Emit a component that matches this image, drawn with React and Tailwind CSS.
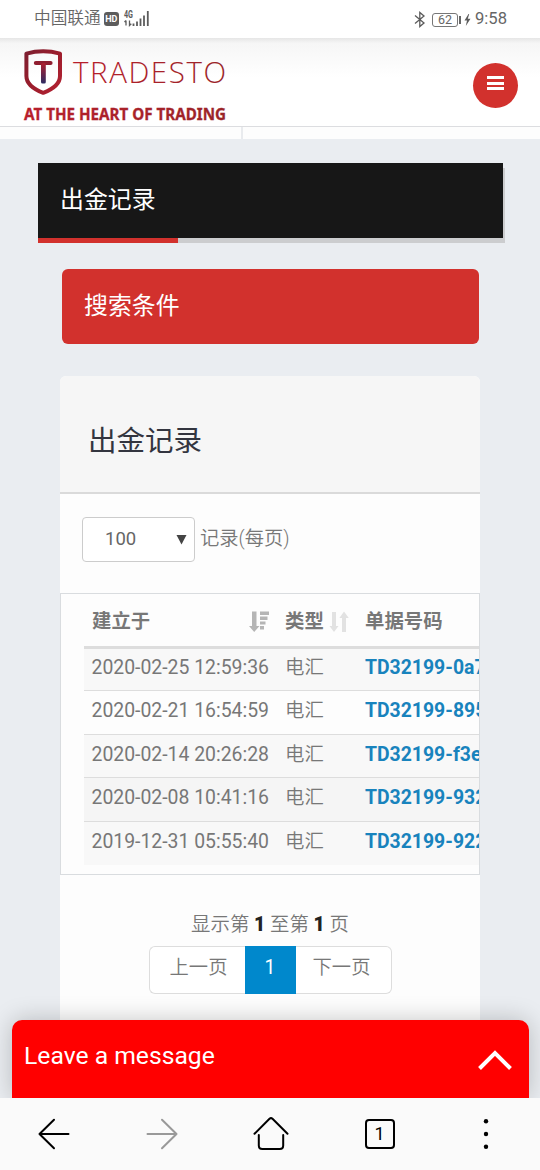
const records = [
  { date: "2020-02-25 12:59:36", type: "电汇", doc: "TD32199-0a7" },
  { date: "2020-02-21 16:54:59", type: "电汇", doc: "TD32199-895" },
  { date: "2020-02-14 20:26:28", type: "电汇", doc: "TD32199-f3e" },
  { date: "2020-02-08 10:41:16", type: "电汇", doc: "TD32199-932" },
  { date: "2019-12-31 05:55:40", type: "电汇", doc: "TD32199-922" },
];

function StatusBar() {
  return (
    <div className="h-[38px] bg-white flex items-center justify-between pt-px pl-[34px] pr-[33px] text-[#666]">
      <div className="flex items-center">
        <span className="text-[16.7px] leading-none font-[350]">中国联通</span>
        <span className="ml-[3px] w-[15px] h-[14px] rounded-[3px] bg-[#5c5c5c] text-white text-[9px] leading-[14px] font-bold text-center">
          HD
        </span>
        <svg className="ml-[5px] -mt-px overflow-visible" width="26" height="17" viewBox="0 0 26 17">
          <text x="0" y="8" fontSize="10" fontWeight="700" fill="#5c5c5c" textLength="9" lengthAdjust="spacingAndGlyphs">4G</text>
          <path d="M2 10.5V15.5M0.5 12L2 10.5M5.5 10.5V15.5L7.3 13.7" fill="none" stroke="#5c5c5c" strokeWidth="1.3" />
          <path d="M9.5 13.5V16M13 11.5V16M16.5 8.5V16M20 5.5V16M23.8 1V16" stroke="#5c5c5c" strokeWidth="1.8" />
        </svg>
      </div>
      <div className="flex items-center">
        <svg width="12" height="17" viewBox="0 0 12 17" fill="none" stroke="#5c5c5c" strokeWidth="1.3">
          <path d="M1 4.5L10 12L5.8 15.5V1.5L10 5L1 12.5" />
        </svg>
        <span className="ml-[6px] w-[26px] h-[14px] rounded-[3px] border border-[#777] text-[12.5px] leading-[12px] text-center">62</span>
        <span className="w-[2px] h-[8px] bg-[#666] ml-px" />
        <svg className="ml-[3px]" width="7" height="12" viewBox="0 0 7 12">
          <path d="M4.5 0L0.5 6.5H3L1.8 12L6.5 4.8H3.8L5.2 0Z" fill="#5c5c5c" />
        </svg>
        <span className="ml-[4px] text-[16.6px] leading-none">9:58</span>
      </div>
    </div>
  );
}

function Logo() {
  return (
    <svg width="210" height="78" viewBox="0 0 210 78" className="block overflow-visible">
      <defs>
        <linearGradient id="shield" x1="0" y1="0" x2="1" y2="1">
          <stop offset="0" stopColor="#7d1f30" />
          <stop offset="0.5" stopColor="#9c1d2c" />
          <stop offset="1" stopColor="#b32232" />
        </linearGradient>
        <linearGradient id="stem" x1="0" y1="0" x2="0" y2="1">
          <stop offset="0" stopColor="#b01f2e" />
          <stop offset="1" stopColor="#2d2b62" />
        </linearGradient>
        <linearGradient id="word" x1="0" y1="0" x2="1" y2="0">
          <stop offset="0" stopColor="#b81f2b" />
          <stop offset="1" stopColor="#9a2428" />
        </linearGradient>
      </defs>
      <path
        d="M2.4 5.6Q19.2 0.8 36 5.6V28C36 36 28 41.5 19.2 44.8C10.4 41.5 2.4 36 2.4 28Z"
        fill="none"
        stroke="url(#shield)"
        strokeWidth="4"
        strokeLinejoin="round"
      />
      <path d="M11.8 15H26.6" stroke="#8f1d2f" strokeWidth="4" strokeLinecap="round" />
      <rect x="17" y="15" width="4.8" height="20.5" rx="1.5" fill="url(#stem)" />
      <text x="49" y="35" fontFamily="Open Sans" fontWeight="300" fontSize="29.5" fill="url(#word)" textLength="153" lengthAdjust="spacing">
        TRADESTO
      </text>
      <text x="0" y="71.5" fontFamily="Noto Sans" fontWeight="700" fontSize="16.6" fill="url(#word)" stroke="url(#word)" strokeWidth="0.3" textLength="202" lengthAdjust="spacingAndGlyphs">
        AT THE HEART OF TRADING
      </text>
    </svg>
  );
}

function Header() {
  return (
    <header>
      <div className="h-[89px] flex justify-between items-start pl-6 pr-[22px] border-b border-[#dcdde0] bg-linear-to-b from-[#e6e6e6] from-0% via-[#f6f6f6] via-6% to-white to-45%">
        <div className="pt-[10px]">
          <Logo />
        </div>
        <button className="mt-[25px] w-[45px] h-[45px] rounded-full bg-[#d2312d] flex flex-col items-center pt-[13px] gap-[2.7px]">
          <span className="w-[17px] h-[3px] bg-white" />
          <span className="w-[17px] h-[3px] bg-white" />
          <span className="w-[17px] h-[3px] bg-white" />
        </button>
      </div>
      <div className="h-[12px] flex bg-[#fdfdfd]">
        <div className="w-[243px] border-r-2 border-[#e9ebee]" />
      </div>
    </header>
  );
}

function SortDesc() {
  return (
    <svg width="21" height="22" viewBox="0 0 21 22" fill="#b5b5b5">
      <path d="M3 0.5H7.5V15H10.5L5.2 21L0 15H3Z" />
      <path d="M11 0.5H20V4H11ZM11 5.5H18.5V9H11ZM11 10.5H16.5V13.5H11ZM11 15H15V18.5H11Z" />
    </svg>
  );
}

function SortBoth() {
  return (
    <svg width="20" height="22" viewBox="0 0 20 22" fill="#e2e2e2">
      <path d="M3 1H7V15H9.5L5 21L0.5 15H3Z" />
      <path d="M13 21H17V7H19.8L15 0.5L10.4 7H13Z" />
    </svg>
  );
}

function RecordsTable() {
  return (
    <div className="h-[282px] border border-[#d9dcdf] bg-[#fdfdfd] pl-[23px] overflow-hidden">
      <table className="w-[440px] table-fixed border-collapse text-left text-[19.4px] leading-[22px] text-[#777] whitespace-nowrap">
        <thead>
          <tr className="h-[53px] border-b-3 border-[#dddddd]">
            <th className="w-[193px] pl-2 font-bold">
              <div className="flex justify-between items-end pr-[7px] pt-[5px]">
                建立于 <SortDesc />
              </div>
            </th>
            <th className="w-[80px] pl-2 font-bold">
              <div className="flex gap-[5px] pt-[5px]">
                类型 <SortBoth />
              </div>
            </th>
            <th className="pl-2 pt-[5px] font-bold">单据号码</th>
          </tr>
        </thead>
        <tbody>
          {records.map((r) => (
            <tr key={r.date} className="h-[43.5px] border-b border-[#dddddd] odd:bg-[#f8f8f8] nth-[4]:bg-[#f5f5f5] last:border-b-0">
              <td className="pl-[7.5px] pb-[2px]">{r.date}</td>
              <td className="pl-2 pb-[2px] font-[350]">{r.type}</td>
              <td className="pl-2 pb-[2px] font-bold text-[#1883bd]">{r.doc}</td>
            </tr>
          ))}
        </tbody>
      </table>
    </div>
  );
}

function Pagination() {
  return (
    <div className="ml-[88.5px] w-[243px] h-[48px] flex text-[19.3px] leading-[42px] text-center text-[#777] font-[350]">
      <span className="w-[96px] pl-[3px] border border-r-0 border-[#dddddd] rounded-l-[6px] bg-white">上一页</span>
      <span className="w-[51px] bg-[#0088cc] text-white font-normal leading-[44px]">1</span>
      <span className="w-[96px] pr-[3px] border border-l-0 border-[#dddddd] rounded-r-[6px] bg-white">下一页</span>
    </div>
  );
}

function BrowserBar() {
  return (
    <nav className="relative h-[72px] bg-[#fafafa] flex items-center justify-between pl-[38px] pr-[38px] text-black">
      <svg width="32" height="32" viewBox="0 0 32 32" fill="none" stroke="currentColor" strokeWidth="2" strokeLinecap="round" strokeLinejoin="round">
        <path d="M30.5 16H1.5M16 1.8L1.5 16L16 30.2" />
      </svg>
      <svg width="32" height="32" viewBox="0 0 32 32" fill="none" stroke="#999" strokeWidth="2" strokeLinecap="round" strokeLinejoin="round">
        <path d="M1.5 16H30.5M16 1.8L30.5 16L16 30.2" />
      </svg>
      <svg width="36" height="36" viewBox="0 0 36 36" fill="none" stroke="currentColor" strokeWidth="2" strokeLinecap="round" strokeLinejoin="round">
        <path d="M1.5 17.8L16.5 2.8Q18 1.5 19.5 2.8L34.5 17.8M5.8 19V29.5Q5.8 33 9.3 33H26.7Q30.2 33 30.2 29.5V19" />
      </svg>
      <span className="w-[30px] h-[30px] rounded-[4px] border-2 border-black text-[18px] leading-[26px] text-center">1</span>
      <svg width="32" height="32" viewBox="0 0 32 32" fill="currentColor">
        <circle cx="16" cy="3.2" r="2.2" />
        <circle cx="16" cy="16" r="2.2" />
        <circle cx="16" cy="28.8" r="2.2" />
      </svg>
    </nav>
  );
}

export default function App() {
  return (
    <div className="w-[540px] h-[1170px] flex flex-col overflow-hidden bg-[#eaedf1] font-['Roboto','Noto_Sans_CJK_SC',sans-serif]">
      <StatusBar />
      <Header />
      <main className="flex-1 min-h-0 overflow-hidden pt-[24px] flex flex-col">
        <div className="ml-[38px] w-[465px] shrink-0 bg-[#171717] shadow-[2px_5px_0_#cccdcf]">
          <h1 className="h-[75px] pl-[22px] text-[23.9px] leading-[74px] text-white">出金记录</h1>
          <div className="-mb-[5px] h-[5px] w-[140px] bg-[#d2312d]" />
        </div>

        <section className="mt-[31px] ml-[61.5px] w-[417px] h-[75px] shrink-0 rounded-[6px] bg-[#d2312d] pl-[22.5px] text-[23.9px] leading-[75px] text-white">
          搜索条件
        </section>

        <section className="mt-[32px] mx-[60px] h-[722px] shrink-0 rounded-t-[6px] bg-[#fdfdfd] overflow-hidden">
          <h2 className="h-[118px] border-b-2 border-[#dadada] bg-[#f6f6f6] pl-[28px] text-[28.5px] leading-[131px] text-[#33353f]">
            出金记录
          </h2>
          <div className="flex items-center pt-[23px] pl-[22px] text-[19.3px] text-[#777]">
            <div className="w-[113px] h-[45px] rounded-[4px] border-[1.5px] border-[#cccccc] bg-white pl-[22px] pr-[7px] flex items-center justify-between text-[#666] text-[18.5px]">
              100
              <svg width="11" height="11" viewBox="0 0 11 11" fill="#444">
                <path d="M0.5 1H10.5L5.5 10.5Z" />
              </svg>
            </div>
            <span className="ml-[5px] font-[350]">记录(每页)</span>
          </div>
          <div className="mt-[31px]">
            <RecordsTable />
          </div>
          <p className="mt-[34px] mb-[6px] text-center text-[19.4px] leading-[31px] text-[#777] font-[350]">
            显示第 <b className="font-black text-[#222]">1</b> 至第 <b className="font-black text-[#222]">1</b> 页
          </p>
          <Pagination />
        </section>
      </main>

      <div className="relative -mt-[78px] ml-[12px] w-[517px] h-[78px] shrink-0 rounded-t-[10px] bg-[#ff0000] shadow-[0_0_24px_rgba(0,0,0,0.22)] flex items-start justify-between pl-3 pr-[16px] text-white">
        <span className="pt-[21px] text-[24.7px] leading-[30px]">Leave a message</span>
        <svg className="mt-[28px]" width="36" height="24" viewBox="0 0 36 24" fill="none" stroke="currentColor" strokeWidth="4">
          <path d="M2.5 20.5L18 5L33.5 20.5" />
        </svg>
      </div>
      <BrowserBar />
    </div>
  );
}
